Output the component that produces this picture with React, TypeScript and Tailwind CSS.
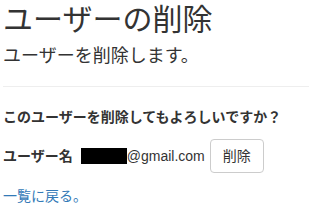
import React from 'react';

const font = { fontFamily: '"Liberation Sans", "Noto Sans CJK JP", sans-serif' };

export default function App() {
  return (
    <div className="min-h-screen bg-white px-[3px] text-[#333] text-[14px]" style={font}>
      <h2 className="pt-[3px] text-[30px] leading-[33px] font-normal">ユーザーの削除</h2>
      <h4 className="mt-[10px] text-[18px] leading-[20px] font-normal">ユーザーを削除します。</h4>
      <hr className="mt-[20px] border-t border-[#eee]" />
      <p className="mt-[20px] font-bold leading-[20px]">このユーザーを削除してもよろしいですか？</p>
      <div className="mt-[12px] flex items-center">
        <span className="font-bold">ユーザー名</span>
        <span className="ml-[8px] inline-block h-[16px] w-[46px] bg-black" />
        <span>@gmail.com</span>
        <button className="ml-[5px] rounded-[4px] border border-[#ccc] bg-white px-[12px] py-[6px] leading-[20px] text-[#333]">
          削除
        </button>
      </div>
      <a href="#" className="mt-[13px] block leading-[20px] text-[#337ab7]">一覧に戻る。</a>
    </div>
  );
}
